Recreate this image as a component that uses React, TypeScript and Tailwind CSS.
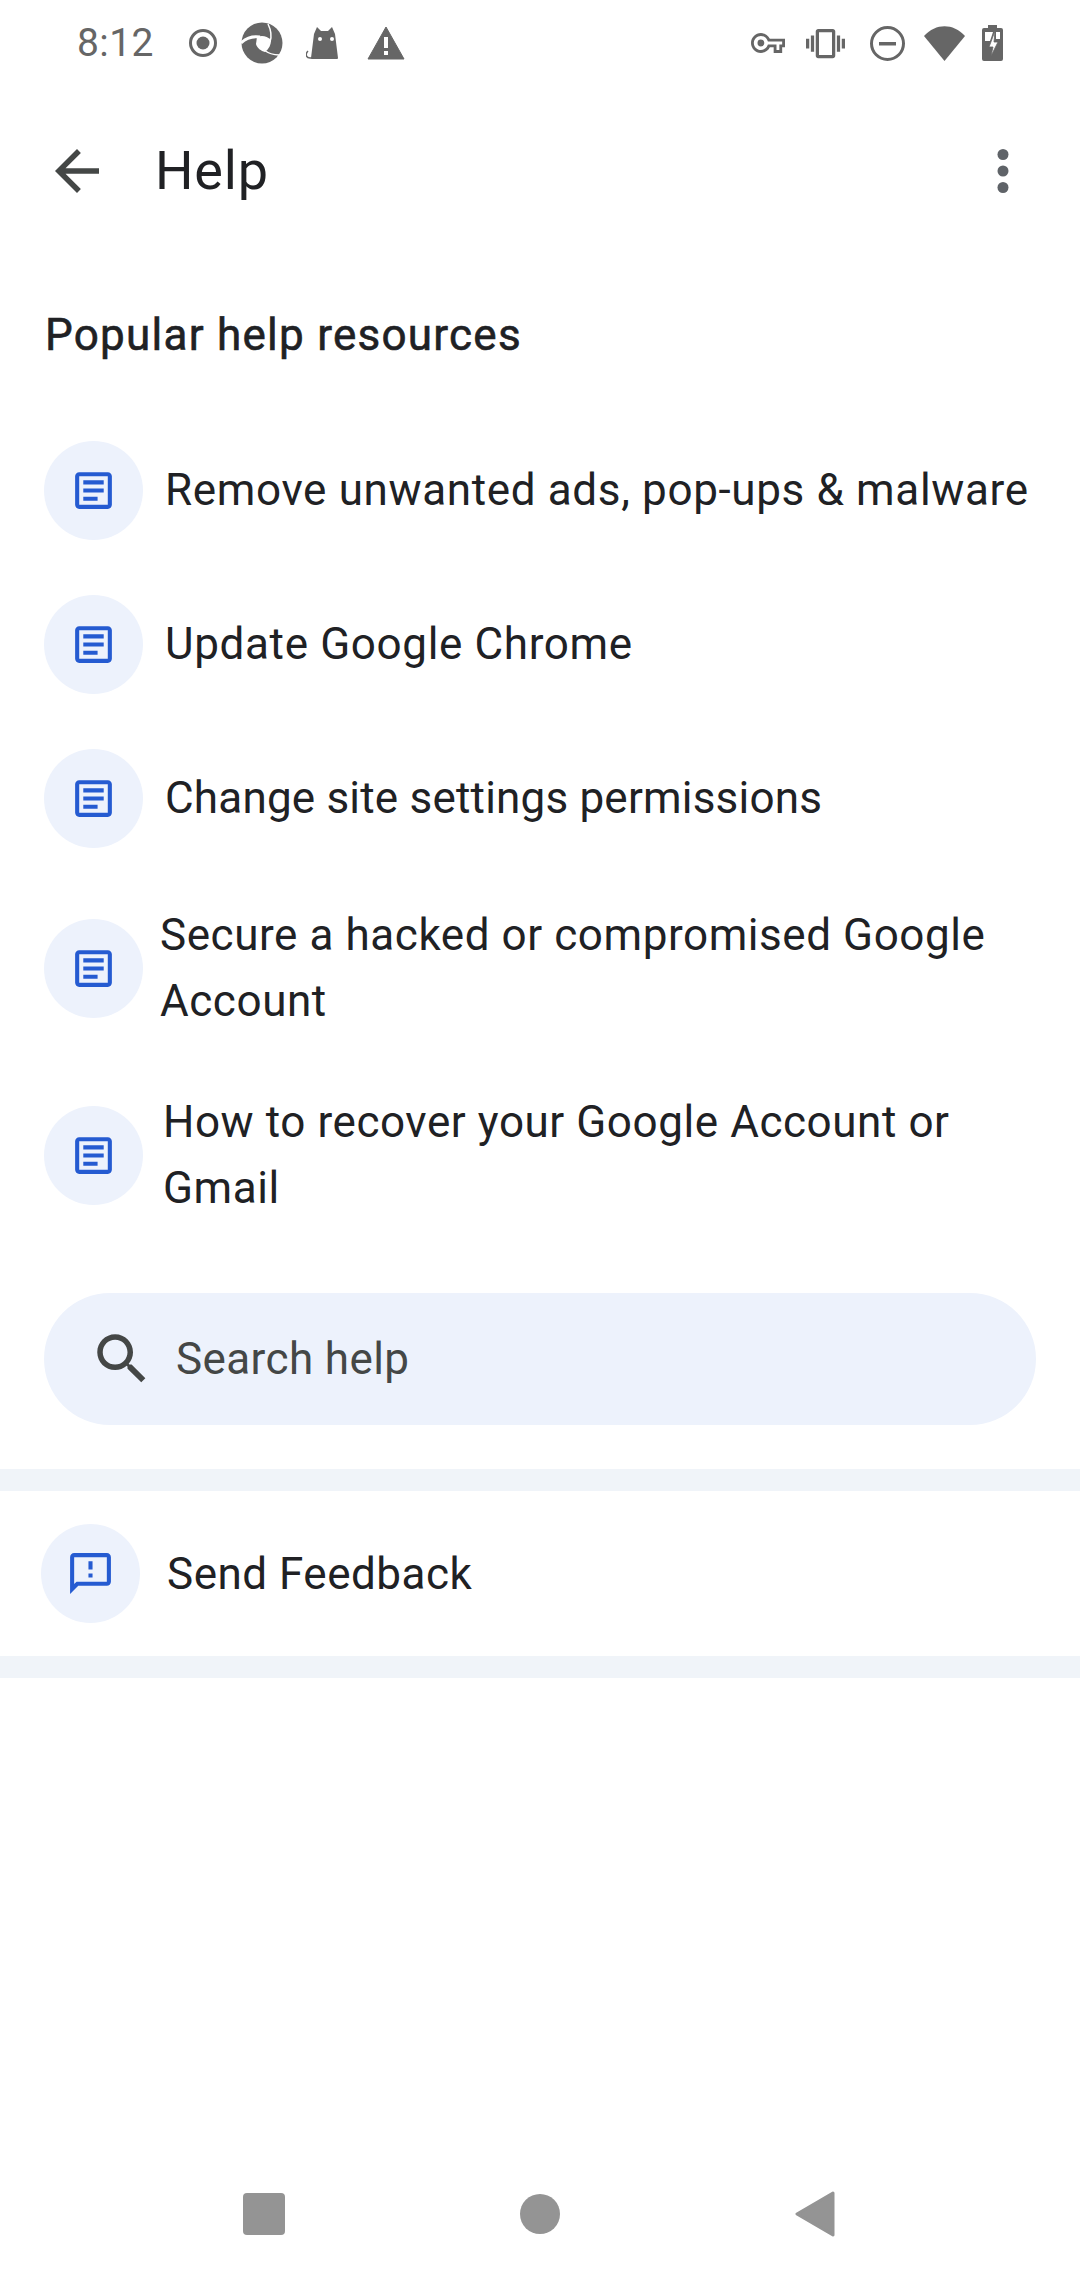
const docIcon = "M19 5v14H5V5h14m0-2H5c-1.1 0-2 .9-2 2v14c0 1.1.9 2 2 2h14c1.1 0 2-.9 2-2V5c0-1.1-.9-2-2-2zM14 17H7v-2h7v2zm3-4H7v-2h10v2zm0-4H7V7h10v2z"

const rows = [
  { text: 'Remove unwanted ads, pop-ups & malware', box: 'h-[154px] pl-[44px]', label: 'ml-[22px] tracking-[0.65px]' },
  { text: 'Update Google Chrome', box: 'h-[154px] pl-[44px]', label: 'ml-[22px] tracking-[0.65px]' },
  { text: 'Change site settings permissions', box: 'h-[154px] pl-[44px]', label: 'ml-[22px] tracking-[0.2px]' },
  { text: 'Secure a hacked or compromised Google Account', box: 'h-[186px] pl-[44px]', label: 'ml-[17px] tracking-[0.57px]' },
  { text: 'How to recover your Google Account or Gmail', box: 'h-[188px] pl-[44px]', label: 'ml-[20px] tracking-[0.57px]' },
]

function StatusBar() {
  return (
    <div className="flex h-[86px] items-center pl-[77px] text-[#666666]">
      <span className="w-[76px] text-[39px] leading-none tracking-[0.4px]">8:12</span>
      <svg className="ml-[35px] h-[30px] w-[30px]" viewBox="0 0 30 30">
        <circle cx="15" cy="15" r="12.5" fill="none" stroke="#666666" strokeWidth="3" />
        <circle cx="15" cy="15" r="6.5" fill="#666666" />
      </svg>
      <svg className="ml-[23px] h-[42px] w-[42px]" viewBox="0 0 42 42">
        <circle cx="21" cy="21" r="20.5" fill="#666666" />
        <path d="M16 15C21 13 26 14 30 18C30 23 28 27 24 30C20 29 16 26 15 22z" fill="#ffffff" />
        <path d="M0 21C6 15 12 14 19 15" fill="none" stroke="#ffffff" strokeWidth="3" />
        <path d="M27 2C30 8 31 14 29 20M38 33C32 33 27 31 23 28" fill="none" stroke="#ffffff" strokeWidth="1.5" />
      </svg>
      <svg className="ml-[23px] h-[34px] w-[36px]" viewBox="0 0 36 34">
        <path d="M11 1l4 4h7l4-4 3 7 3 24q0 1-1 1H6q-1 0-1-1l3-24z" fill="#666666" />
        <path d="M8 32H4C0 32-1 28 2 25" fill="none" stroke="#666666" strokeWidth="1.5" />
        <circle cx="14" cy="13" r="2" fill="#ffffff" />
        <circle cx="26" cy="13" r="2" fill="#ffffff" />
      </svg>
      <svg className="ml-[25px] h-[34px] w-[38px]" viewBox="0 0 38 34">
        <path d="M19 1l18 32H1z" fill="#666666" stroke="#666666" strokeLinejoin="round" />
        <path d="M17 11h4v11h-4zM17 25h4v4h-4z" fill="#ffffff" />
      </svg>
      <div className="flex-1" />
      <svg className="h-[34px] w-[34px]" viewBox="0 0 24 24" fill="#666666">
        <path fillRule="evenodd" d="M22 19h-6v-4h-2.68c-1.14 2.42-3.6 4-6.32 4-3.86 0-7-3.14-7-7s3.14-7 7-7c2.72 0 5.17 1.58 6.32 4H24v6h-2v4zm-4-2h2v-4h2v-2H11.94l-.23-.67C11.01 8.34 9.11 7 7 7c-2.76 0-5 2.24-5 5s2.24 5 5 5c2.11 0 4.01-1.34 4.71-3.33l.23-.67H18v4z" />
        <circle cx="7" cy="12" r="2.4" />
      </svg>
      <svg className="ml-[21px] h-[39px] w-[39px]" viewBox="0 0 24 24" fill="#666666">
        <path d="M0 15h2V9H0v6zm3 2h2V7H3v10zm19-8v6h2V9h-2zm-3 8h2V7h-2v10zM16.5 3h-9C6.67 3 6 3.67 6 4.5v15c0 .83.67 1.5 1.5 1.5h9c.83 0 1.5-.67 1.5-1.5v-15c0-.83-.67-1.5-1.5-1.5zM16 19H8V5h8v14z" />
      </svg>
      <svg className="ml-[25px] h-[35px] w-[35px]" viewBox="0 0 35 35">
        <circle cx="17.5" cy="17.5" r="16" fill="none" stroke="#666666" strokeWidth="3" />
        <path d="M9 16h17v3.5H9z" fill="#666666" />
      </svg>
      <svg className="ml-[19px] h-[35px] w-[41px]" viewBox="0 0 41 35">
        <path d="M0 10C12 -3 29 -3 41 10L20.5 35z" fill="#666666" />
      </svg>
      <svg className="ml-[17px] mr-[77px] h-[36px] w-[21px]" viewBox="0 0 21 36">
        <path d="M6 0h9v3h4a2 2 0 0 1 2 2v29a2 2 0 0 1-2 2H2a2 2 0 0 1-2-2V5a2 2 0 0 1 2-2h4z" fill="#666666" />
        <path d="M3 7h8l-3 9H3zM14 7h4v7h-4z" fill="#ffffff" />
        <path d="M13 6l-6 16h4l-2 9 7-14h-4z" fill="#ffffff" stroke="#666666" strokeWidth="0.8" />
      </svg>
    </div>
  )
}

function NavBar() {
  return (
    <div className="flex h-[42px] items-center pl-[243px]">
      <div className="h-[42px] w-[42px] rounded-[4px] bg-[#949494]" />
      <div className="ml-[235px] h-[40px] w-[40px] rounded-full bg-[#949494]" />
      <svg className="ml-[235px] h-[46px] w-[41px]" viewBox="0 0 41 46">
        <path d="M38 2L2 23l36 21z" fill="#949494" stroke="#949494" strokeWidth="3" strokeLinejoin="round" />
      </svg>
    </div>
  )
}

export default function App() {
  return (
    <div className="flex h-[2280px] w-[1080px] flex-col overflow-hidden bg-white font-['Roboto',sans-serif] text-[#202124]">
      <StatusBar />
      <div className="flex h-[170px] items-center">
        <svg className="ml-[44px] h-[66px] w-[66px] text-[#444746]" viewBox="0 0 24 24" fill="currentColor">
          <path d="M20 11H7.83l5.59-5.59L12 4l-8 8 8 8 1.41-1.41L7.83 13H20v-2z" />
        </svg>
        <span className="ml-[45px] flex-1 text-[54px] leading-none tracking-[0.8px]">Help</span>
        <svg className="mr-[44px] h-[66px] w-[66px] text-[#5f6368]" viewBox="0 0 24 24" fill="currentColor">
          <circle cx="12" cy="6" r="2" />
          <circle cx="12" cy="12" r="2" />
          <circle cx="12" cy="18" r="2" />
        </svg>
      </div>
      <div className="flex h-[157px] items-center pl-[45px] text-[44px] tracking-[1.25px] [-webkit-text-stroke:0.6px_#202124]">Popular help resources</div>
      {rows.map((r) => (
        <div key={r.text} className={`flex items-center ${r.box}`}>
          <div className="flex h-[99px] w-[99px] shrink-0 items-center justify-center rounded-full bg-[#edf2fc]">
            <svg className="h-[49px] w-[49px] text-[#255bd1]" viewBox="0 0 24 24" fill="currentColor">
              <path d={docIcon} />
            </svg>
          </div>
          <span className={`${r.label} w-[875px] text-[44px] leading-[66px]`}>{r.text}</span>
        </div>
      ))}
      <div className="mx-[44px] mt-[44px] flex h-[132px] items-center rounded-full bg-[#edf2fc] text-[#444746]">
        <svg className="ml-[45px] h-[66px] w-[66px]" viewBox="0 0 24 24" fill="currentColor">
          <path d="M15.5 14h-.79l-.28-.27C15.41 12.59 16 11.11 16 9.5 16 5.91 13.09 3 9.5 3S3 5.91 3 9.5 5.91 16 9.5 16c1.61 0 3.09-.59 4.23-1.57l.27.28v.79l5 4.99L20.49 19l-4.99-5zm-6 0C7.01 14 5 11.99 5 9.5S7.01 5 9.5 5 14 7.01 14 9.5 11.99 14 9.5 14z" />
        </svg>
        <span className="ml-[21px] text-[44px] tracking-[0.4px]">Search help</span>
      </div>
      <div className="mt-[44px] h-[22px] bg-[#f0f4f9]" />
      <div className="flex h-[165px] items-center pl-[41px]">
        <div className="flex h-[99px] w-[99px] items-center justify-center rounded-full bg-[#edf2fc]">
          <svg className="h-[49px] w-[49px] text-[#255bd1]" viewBox="0 0 24 24" fill="currentColor">
            <path d="M20 2H4c-1.1 0-1.99.9-1.99 2L2 22l4-4h14c1.1 0 2-.9 2-2V4c0-1.1-.9-2-2-2zm0 14H5.17L4 17.17V4h16v12zM11 12h2v2h-2zm0-6h2v4h-2z" />
          </svg>
        </div>
        <span className="ml-[27px] text-[44px] tracking-[0.5px]">Send Feedback</span>
      </div>
      <div className="h-[22px] bg-[#f0f4f9]" />
      <div className="flex-1" />
      <div className="pb-[45px]">
        <NavBar />
      </div>
    </div>
  )
}
